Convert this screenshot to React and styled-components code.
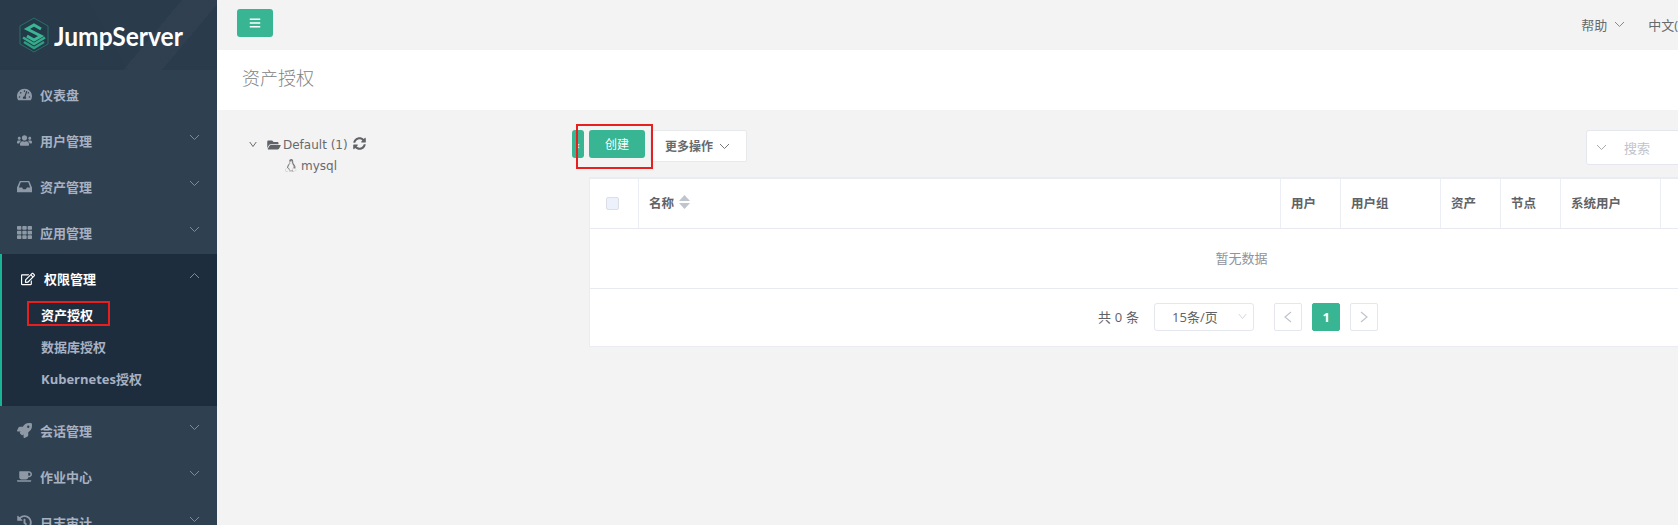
import React from "react";
import styled, { createGlobalStyle } from "styled-components";
import {
  FaTachometerAlt, FaUsers, FaTh, FaRegEdit, FaRocket, FaCoffee, FaHistory,
  FaFolderOpen, FaSyncAlt, FaLinux, FaBars,
} from "react-icons/fa";

const Global = createGlobalStyle`
  html, body { margin: 0; height: 525px; overflow: hidden; background: #f3f3f4; }
  * { box-sizing: border-box; }
  body { font-family: "Open Sans", "Noto Sans CJK SC", sans-serif; color: #676a6c; font-size: 13px; }
`;

const Shell = styled.div`display: flex; width: 1906px; height: 525px; overflow: hidden;`;
const Side = styled.aside`width: 217px; flex: none; background: #2f4050; height: 700px;`;
const Brand = styled.div`
  height: 70px; display: flex; align-items: center; gap: 5px; padding: 0 0 0 19px;
  background:
    linear-gradient(130deg, transparent 66%, rgba(255,255,255,.025) 66%, rgba(255,255,255,.025) 80%, transparent 80%),
    linear-gradient(60deg, #293a4a 0 50%, #2a3b4b 50%);
`;
const BrandName = styled.span`
  font-family: "Lato", sans-serif; font-weight: 700; font-size: 27px; color: #fff; line-height: 1; margin-top: 1px;
  display: inline-block; transform: scaleX(.91); transform-origin: left center;
`;
const Item = styled.div`
  height: 46px; display: flex; align-items: center; padding: 3px 17px 0 17px; color: #a7b1c2; font-weight: 700; font-size: 13px;
  & > svg:first-child { width: 15px; height: 15px; color: #8f99a6; margin-right: 8px; flex: none; }
`;
const ItemLabel = styled.span`flex: 1;`;
const Caret = styled.svg`
  width: ${p => p.$w || 11}px; height: 7px; fill: none; stroke: ${p => p.$c || "#7f8b98"}; stroke-width: 1;
  transform: ${p => (p.$up ? "rotate(180deg)" : "none")};
  flex: none;
`;
const Chevron = ({ up, color, width, className }) => (
  <Caret viewBox="0 0 11 7" preserveAspectRatio="none" $up={up} $c={color} $w={width} className={className}><polyline points="1,1 5.5,5.5 10,1" /></Caret>
);
const InboxIcon = () => (
  <svg viewBox="0 0 16 12" fill="currentColor" aria-hidden="true">
    <path fillRule="evenodd" d="M3 0H13L16 7V12H0V7ZM4 1.5L2 7H5.5L6.5 9H9.5L10.5 7H14L12 1.5Z" />
  </svg>
);
const ItemCaret = styled(Chevron)`margin: -7px 0 0 0;`;
const ActiveGroup = styled.div`height: 152px; background: #1e2d3d; border-left: 2px solid #1ab394; `;
const ActiveItem = styled(Item)`
  color: #fff; padding-left: 19px; padding-top: 3px; height: 46px;
  & > svg:first-child { color: #fff; margin-right: 9px; width: 14px; height: 14px; }
`;
const SubList = styled.div`display: flex; flex-direction: column; margin-top: -2px;`;
const SubItem = styled.div`
  height: 32px; display: flex; align-items: center; padding-left: 39px; font-weight: 700; font-size: 13px;
  color: ${p => (p.$on ? "#fff" : "#a7b1c2")}; position: relative;
`;
const RedBox = styled.span`
  position: absolute; border: 2px solid #e7201f; pointer-events: none;
  left: ${p => p.$l}px; top: ${p => p.$t}px; width: ${p => p.$w}px; height: ${p => p.$h}px;
`;

const Main = styled.main`flex: 1; display: flex; flex-direction: column; min-width: 0;`;
const Top = styled.header`height: 50px; display: flex; align-items: center; padding: 0 0 0 20px; position: relative; flex: none;`;
const MenuBtn = styled.button`
  width: 36px; height: 28px; border: 0; border-radius: 3px; background: #38b592; color: #fff; margin-top: -4px;
  display: flex; align-items: center; justify-content: center; padding: 0;
  svg { width: 12px; height: 12px; }
`;
const TopRight = styled.div`margin-left: auto; display: flex; align-items: center; gap: 23px; margin-top: -2px; padding-right: 180px; font-size: 13px; color: #676a6c;`;
const TopLink = styled.span`display: inline-flex; align-items: center; gap: 7px;`;
const Title = styled.div`height: 60px; flex: none; background: #fff; padding: 15px 0 0 25px; font-size: 18px; font-weight: 300; color: #808284; line-height: 26px;`;
const Body = styled.div`display: flex; flex: 1; padding-top: 20px;`;
const TreePane = styled.div`width: 355px; flex: none; padding: 4px 0 0 32px; font-family: "DejaVu Sans", sans-serif; font-size: 12px; color: #676a6c;`;
const TreeRow = styled.div`height: 21px; display: flex; align-items: center; padding-left: ${p => p.$in || 0}px; gap: ${p => p.$gap || 4}px;`;
const TreeFolder = styled(FaFolderOpen)`width: 14px; height: 12px; color: #5f6367; margin-left: 6px; margin-right: -2px;`;
const TreeSync = styled(FaSyncAlt)`width: 13px; height: 13px; color: #5f6367; margin: -2px 0 0 1px;`;
const TreeLinux = styled(FaLinux)`width: 12px; height: 13px; color: #777;`;
const Right = styled.div`flex: 1; min-width: 0; position: relative; padding-right: 9px;`;
const Bar = styled.div`height: 36px; display: flex; align-items: flex-start; margin-bottom: 12px;`;
const Toggle = styled.span`
  width: 12px; height: 28px; background: #38b592; border-radius: 3px; color: #fff; font-size: 11px;
  display: flex; align-items: center; justify-content: center; margin-right: 5px;
`;
const Create = styled.button`
  width: 56px; height: 28px; background: #38b592; color: #fff; border: 0; border-radius: 3px; font: 400 12px "Open Sans", "Noto Sans CJK SC", sans-serif; padding: 0; margin-right: 5px;
`;
const More = styled.button`
  width: 97px; height: 32px; background: #fff; border: 1px solid #e7eaec; border-radius: 2px; color: #676a6c; display: inline-flex; align-items: center; padding: 0 0 0 14px; gap: 6px;
  font: 700 12px "Open Sans", "Noto Sans CJK SC", sans-serif;
`;
const Search = styled.div`
  margin-left: auto; width: 311px; height: 35px; background: #fff; border: 1px solid #e4e7ed; border-radius: 3px;
  display: flex; align-items: center; padding-left: 9px; gap: 17px; color: #c0c4cc; font-size: 13px;
`;
const Card = styled.section`margin: -1px 0 0 17px; background: #fff; border-style: solid; border-width: 2px 1px 1px 1px; border-color: #e9edf3;`;
const HeadRow = styled.div`
  display: grid; grid-template-columns: 49px 642px 60px 100px 60px 60px 100px 1fr; height: 50px; border-bottom: 1px solid #e7eaee;
`;
const HeadCell = styled.div`
  display: flex; align-items: center; gap: 5px; padding: 0 10px 3px; font-size: 12.5px; font-weight: 700; color: #606266;
  border-right: 1px solid #ebeef5; &:last-child { border-right: 0; }
  ${p => p.$center && "justify-content: center; padding: 0 4px 1px 0;"}
`;
const Check = styled.span`width: 13px; height: 13px; border: 1px solid #dcdfe6; background: #ecf1fb; border-radius: 2px;`;
const SortSvg = styled.svg`width: 11px; height: 14px; fill: #c0c4cc; flex: none;`;
const Empty = styled.div`height: 60px; display: flex; align-items: center; justify-content: center; border-bottom: 1px solid #e7eaee; color: #909399; font-size: 13px; padding: 0 3px 3px 0;`;
const Pager = styled.div`height: 57px; display: flex; align-items: center; justify-content: center; font-size: 13px; color: #606266; padding-bottom: 2px;`;
const Total = styled.span`margin-right: 15px; letter-spacing: .2px;`;
const PageSize = styled.div`
  width: 100px; height: 28px; border: 1px solid #e4e7ed; border-radius: 3px; display: flex; align-items: center; justify-content: space-between; padding: 0 6px 0 17px; margin-right: 20px;
`;
const PageBtn = styled.span`
  width: 28px; height: 28px; border: 1px solid ${p => (p.$on ? "#38b592" : "#e4e7ed")}; background: ${p => (p.$on ? "#38b592" : "#fff")}; color: ${p => (p.$on ? "#fff" : "#c0c4cc")}; border-radius: 2px;
  display: flex; align-items: center; justify-content: center; margin-right: 10px; font-weight: 700; font-size: 13px;
`;
const PageArrow = styled.svg`width: 8px; height: 12px; fill: none; stroke: #c0c4cc; stroke-width: 1.2;`;

const menus = [[FaTachometerAlt, "仪表盘", false], [FaUsers, "用户管理", true], [InboxIcon, "资产管理", true], [FaTh, "应用管理", true]];
const menus2 = [[FaRocket, "会话管理"], [FaCoffee, "作业中心"], [FaHistory, "日志审计"]];

export default function App() {
  return (
    <Shell>
      <Global />
      <Side>
        <Brand>
          <svg width="30" height="36" viewBox="0 0 30 36" aria-hidden="true" fill="none">
            <polygon points="15,1 29,9 29,27 15,35 1,27 1,9" fill="#233a48" stroke="#2b6e68" strokeWidth="1" />
            <polyline points="22,12 15,8 8,12 22,19 15,23 8,19" stroke="#3bb593" strokeWidth="3" />
            <polyline points="4,20.5 15,27 26,20.5" stroke="#36ab8c" strokeWidth="2.6" />
            <polyline points="5,25 15,31 25,25" stroke="#2f9f82" strokeWidth="2.6" />
          </svg>
          <BrandName>JumpServer</BrandName>
        </Brand>
        {menus.map(([I, t, c]) => (
          <Item key={t}><I /><ItemLabel>{t}</ItemLabel>{c && <ItemCaret />}</Item>
        ))}
        <ActiveGroup>
          <ActiveItem><FaRegEdit /><ItemLabel>权限管理</ItemLabel><ItemCaret up /></ActiveItem>
          <SubList>
            <SubItem $on>资产授权<RedBox $l={25} $t={3} $w={83} $h={25} /></SubItem>
            <SubItem>数据库授权</SubItem>
            <SubItem>Kubernetes授权</SubItem>
          </SubList>
        </ActiveGroup>
        {menus2.map(([I, t]) => (
          <Item key={t}><I /><ItemLabel>{t}</ItemLabel><ItemCaret /></Item>
        ))}
      </Side>
      <Main>
        <Top>
          <MenuBtn aria-label="menu"><FaBars /></MenuBtn>
          <TopRight>
            <TopLink>帮助 <Chevron /></TopLink>
            <TopLink>中文(简体) <Chevron /></TopLink>
          </TopRight>
        </Top>
        <Title>资产授权</Title>
        <Body>
          <TreePane>
            <TreeRow>
              <Chevron color="#555" width={8} />
              <TreeFolder />
              <span>Default (1)</span>
              <TreeSync />
            </TreeRow>
            <TreeRow $in={36} $gap={4}><TreeLinux /><span>mysql</span></TreeRow>
          </TreePane>
          <Right>
            <Bar>
              <Toggle>‹</Toggle>
              <Create>创建</Create>
              <More>更多操作 <Chevron color="#777" /></More>
              <Search><Chevron color="#aaa" />搜索</Search>
              <RedBox $l={4} $t={-6} $w={77} $h={45} />
            </Bar>
            <Card>
              <HeadRow>
                <HeadCell $center><Check /></HeadCell>
                <HeadCell>名称 <SortSvg viewBox="0 0 11 14"><polygon points="5.5,0 11,6 0,6" /><polygon points="0,8 11,8 5.5,14" /></SortSvg></HeadCell>
                <HeadCell>用户</HeadCell>
                <HeadCell>用户组</HeadCell>
                <HeadCell>资产</HeadCell>
                <HeadCell>节点</HeadCell>
                <HeadCell>系统用户</HeadCell>
                <HeadCell />
              </HeadRow>
              <Empty>暂无数据</Empty>
              <Pager>
                <Total>共 0 条</Total>
                <PageSize>15条/页 <Chevron color="#d0d3d9" width={9} /></PageSize>
                <PageBtn><PageArrow viewBox="0 0 8 12"><polyline points="7,1 1,6 7,11" /></PageArrow></PageBtn>
                <PageBtn $on>1</PageBtn>
                <PageBtn><PageArrow viewBox="0 0 8 12"><polyline points="1,1 7,6 1,11" /></PageArrow></PageBtn>
              </Pager>
            </Card>
          </Right>
        </Body>
      </Main>
    </Shell>
  );
}
